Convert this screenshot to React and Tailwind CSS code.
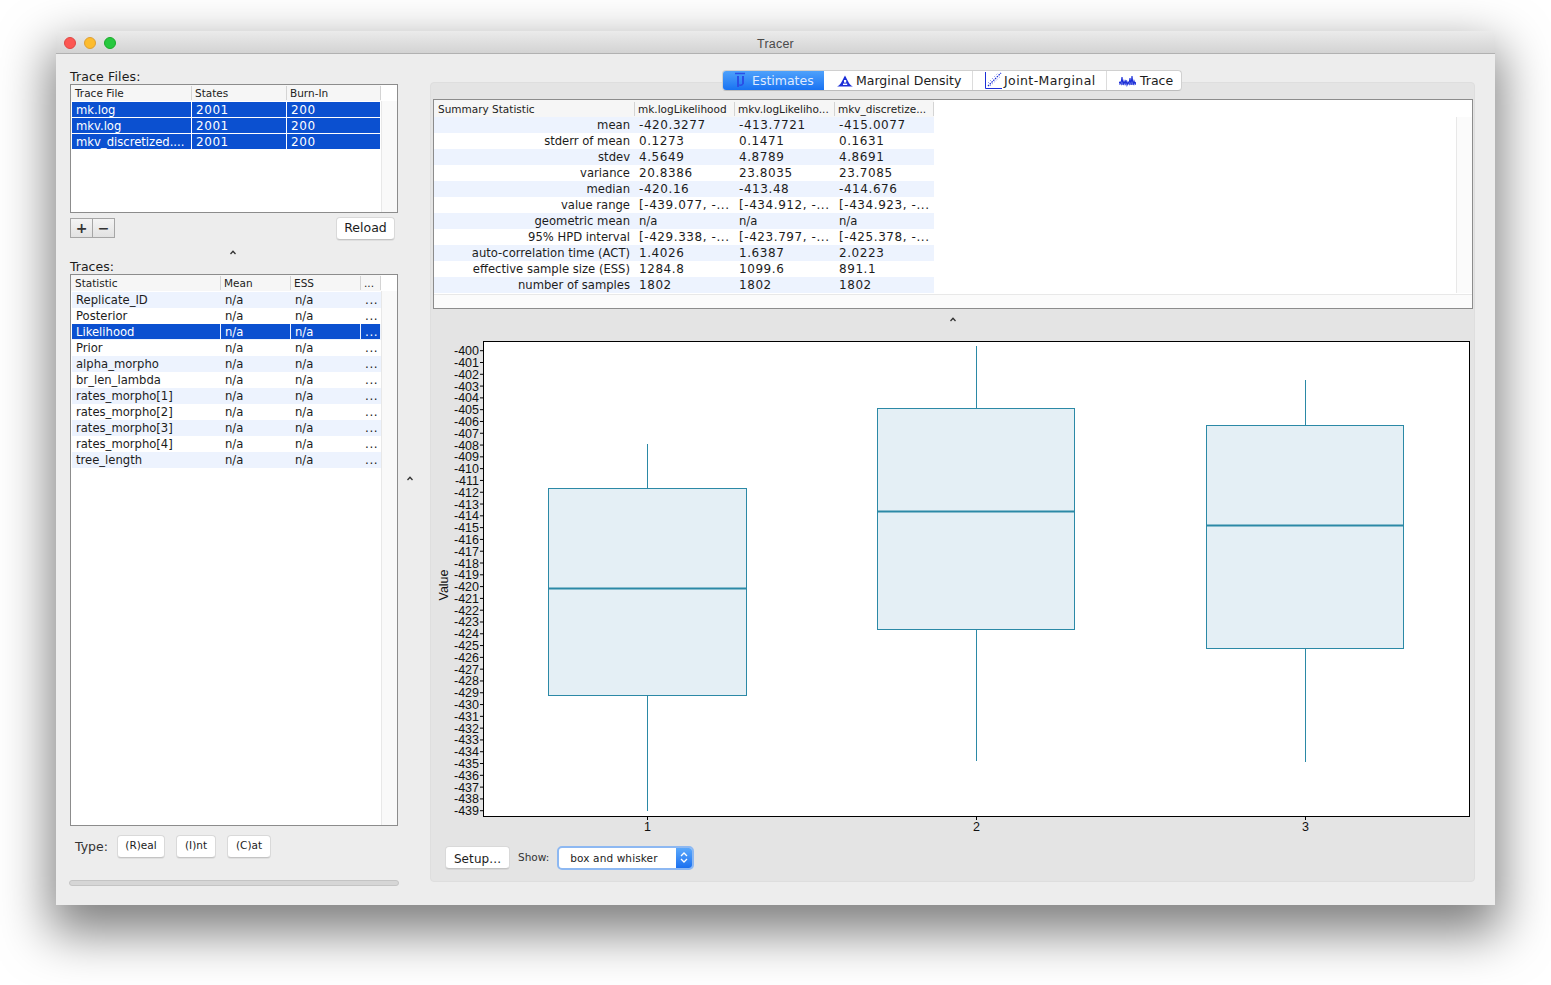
import React from "react";

const FONT = "font-['DejaVu_Sans','Noto_Sans',sans-serif]";

const fileRows = [
  ["mk.log", "2001", "200"],
  ["mkv.log", "2001", "200"],
  ["mkv_discretized....", "2001", "200"],
];

const traceRows = [
  "Replicate_ID",
  "Posterior",
  "Likelihood",
  "Prior",
  "alpha_morpho",
  "br_len_lambda",
  "rates_morpho[1]",
  "rates_morpho[2]",
  "rates_morpho[3]",
  "rates_morpho[4]",
  "tree_length",
];

const summaryRows = [
  ["mean", "-420.3277", "-413.7721", "-415.0077"],
  ["stderr of mean", "0.1273", "0.1471", "0.1631"],
  ["stdev", "4.5649", "4.8789", "4.8691"],
  ["variance", "20.8386", "23.8035", "23.7085"],
  ["median", "-420.16", "-413.48", "-414.676"],
  ["value range", "[-439.077, -...", "[-434.912, -...", "[-434.923, -..."],
  ["geometric mean", "n/a", "n/a", "n/a"],
  ["95% HPD interval", "[-429.338, -...", "[-423.797, -...", "[-425.378, -..."],
  ["auto-correlation time (ACT)", "1.4026", "1.6387", "2.0223"],
  ["effective sample size (ESS)", "1284.8", "1099.6", "891.1"],
  ["number of samples", "1802", "1802", "1802"],
];

// header cell with the little separator on its right edge
function HeadCell({ width, children, wide }) {
  return (
    <div
      className={`flex h-[14px] items-center border-r border-[#d4d4d4] pt-[1px] text-[10.5px] leading-[13px] text-[#222] whitespace-nowrap overflow-hidden ${wide ? "pl-[4px]" : "pl-[3px]"}`}
      style={{ width }}
    >
      {children}
    </div>
  );
}

function Cell({ width, children, selected, right }) {
  // numbers are set wider than the labels in the reference
  const numeric = !right && /^[\[\-\d.]/.test(children);
  return (
    <div
      className={`h-[15px] mr-px flex items-center pt-[1px] whitespace-nowrap overflow-hidden leading-[14px] ${numeric ? "text-[12px] tracking-[0.57px]" : "text-[11.6px]"} ${right ? "justify-end pr-[4px]" : "pl-[4px]"} ${selected ? "bg-[#0b50d0] text-white" : "text-[#1c1c1c]"}`}
      style={{ width: width - 1 }}
    >
      {children}
    </div>
  );
}

function ListTable({ heightClass, head, widths, children }) {
  return (
    <div className={`relative ${heightClass} border border-[#8c8c8c] bg-white`}>
      <div className="flex h-[16px] items-center pl-px bg-[#f6f6f6] w-[310px]">
        {head.map((h, i) => (
          <HeadCell key={h} width={widths[i]}>
            {h}
          </HeadCell>
        ))}
      </div>
      <div className="pt-px pl-px">{children}</div>
      <div className="absolute right-0 top-[16px] bottom-0 w-[16px] bg-[#f9f9f9] border-l border-[#e8e8e8]" />
    </div>
  );
}

function Splitter() {
  return (
    <svg width="6" height="5" viewBox="0 0 6 5" fill="none" className="block">
      <path d="M0.5 4 L3 1.2 L5.5 4" stroke="#333" strokeWidth="1.3" />
    </svg>
  );
}

function MacButton({ className, children }) {
  return (
    <button className={`flex items-center justify-center rounded-[4px] bg-white border border-[#d9d9d9] border-b-[#c4c4c4] shadow-[0_1px_0_rgba(0,0,0,0.06)] text-[#1c1c1c] ${className}`}>
      {children}
    </button>
  );
}

function MuIcon() {
  return (
    <svg width="14" height="17" viewBox="0 0 14 17" fill="none" stroke="#2a4fe6">
      <path d="M2 1.5h10" strokeWidth="1.5" />
      <path d="M5 4v11M10 4v8" strokeWidth="2" />
      <path d="M5 12.5c1.5 1 4 1 5 -0.5" strokeWidth="1.4" />
    </svg>
  );
}

function DensityIcon() {
  return (
    <svg width="16" height="12" viewBox="0 0 16 12">
      <path d="M0 11.5 C3 11 5 6 8 0.5 C11 6 13 11 16 11.5 Z" fill="#1c2fd8" />
      <rect x="7" y="5" width="2.2" height="2.6" fill="#fff" />
      <rect x="6" y="8.6" width="4.2" height="1.4" fill="#fff" />
    </svg>
  );
}

function JointIcon() {
  return (
    <svg width="17" height="17" viewBox="0 0 17 17" fill="none">
      <path d="M0.5 0v16.5H17" stroke="#1c2fd8" />
      <path d="M3 14 L16 1" stroke="#1c2fd8" strokeDasharray="1.5 1" strokeWidth="1.3" />
      <path d="M5 14 L16 4M3 11 L13 1" stroke="#6f7ee8" strokeDasharray="1 2" />
    </svg>
  );
}

function TraceIcon() {
  return (
    <svg width="17" height="12" viewBox="0 0 17 12" fill="none" stroke="#1c2fd8" strokeWidth="1.1">
      <path d="M0 8 L1 7 L2 9 L3 2 L4 10 L5 6 L6 9 L7 5 L8 10 L9 7 L10 9 L11 3 L12 10 L13 1 L14 10 L15 6 L16 9 L17 7" />
      <path d="M0 9h17" strokeDasharray="1 1" />
    </svg>
  );
}

function Tabs() {
  const tab = "flex items-center h-full border-r border-[#dcdcdc] text-[12.5px] text-[#1c1c1c]";
  return (
    <div className="relative z-10 ml-[292px] flex h-[21px] w-[460px] rounded-[4px] bg-white border border-[#d0d0d0] border-b-[#bdbdbd] overflow-hidden">
      <div className="flex h-full w-[101px] items-center gap-[5px] pl-[10px] bg-gradient-to-b from-[#4ea1fb] to-[#1872f2] text-[#dfeaff] text-[12.5px]">
        <MuIcon />
        <span className="pt-[1px]">Estimates</span>
      </div>
      <div className={`${tab} w-[149px] pl-[13px] gap-[3px]`}>
        <DensityIcon />
        <span className="pt-[1px]">Marginal Density</span>
      </div>
      <div className={`${tab} w-[134px] pl-[12px] gap-[2px]`}>
        <JointIcon />
        <span className="pt-[1px] tracking-[0.4px]">Joint-Marginal</span>
      </div>
      <div className="flex h-full flex-1 items-center pl-[12px] gap-[4px] text-[12.5px] text-[#1c1c1c]">
        <TraceIcon />
        <span className="pt-[1px]">Trace</span>
      </div>
    </div>
  );
}

function SummaryTable() {
  const widths = [201, 100, 100, 99];
  return (
    <div className="relative h-[210px] w-[1040px] border border-[#8c8c8c] bg-white">
      <div className="flex h-[17px] w-[500px] items-center bg-[#f6f6f6]">
        {["Summary Statistic", "mk.logLikelihood", "mkv.logLikeliho...", "mkv_discretize..."].map((h, i) => (
          <HeadCell key={h} width={widths[i]} wide={i === 0}>
            {h}
          </HeadCell>
        ))}
      </div>
      <div className="w-[500px]">
        {summaryRows.map((row, r) => (
          <div key={row[0]} className={`flex h-[16px] ${r % 2 === 0 ? "bg-[#edf3fe]" : "bg-white"}`}>
            {row.map((c, i) => (
              <Cell key={i} width={widths[i]} right={i === 0}>
                {c}
              </Cell>
            ))}
          </div>
        ))}
      </div>
      <div className="absolute right-0 top-[17px] h-[176px] w-[16px] border-l border-[#e8e8e8] bg-[#fbfbfb]" />
      <div className="absolute left-0 right-0 bottom-0 h-[14px] border-t border-[#e8e8e8] bg-[#fbfbfb]" />
    </div>
  );
}

function Chart() {
  const ticks = [];
  for (let i = 0; i < 40; i++) ticks.push(i);
  const stroke = "#2b89a6";
  const boxes = [
    { label: "1", x: 548.5, w: 198, top: 488.5, bottom: 695.5, med: 588.5, cx: 647.5, hi: 444, lo: 811 },
    { label: "2", x: 877.5, w: 197, top: 408.5, bottom: 629.5, med: 511.5, cx: 976.5, hi: 346, lo: 761 },
    { label: "3", x: 1206.5, w: 197, top: 425.5, bottom: 648.5, med: 525.5, cx: 1305.5, hi: 380, lo: 762 },
  ];
  return (
    <svg width="1040" height="500" viewBox="433 335 1040 500" className="block">
      <rect x="483.5" y="341.5" width="986" height="475" fill="#fff" stroke="#000" />
      {ticks.map((i) => {
        const y = 350.7 + i * 11.795;
        return (
          <g key={i}>
            <line x1="480" x2="483" y1={y} y2={y} stroke="#000" />
            <text x="479" y={y + 4.5} textAnchor="end" fontFamily="'Liberation Sans', sans-serif" fontSize="12.5" fill="#111">
              {-400 - i}
            </text>
          </g>
        );
      })}
      {boxes.map((b) => (
        <g key={b.label}>
          <line x1={b.cx} x2={b.cx} y1={b.hi} y2={b.lo} stroke={stroke} />
          <rect x={b.x} y={b.top} width={b.w} height={b.bottom - b.top} fill="#e4eff5" stroke={stroke} />
          <line x1={b.x} x2={b.x + b.w} y1={b.med} y2={b.med} stroke={stroke} strokeWidth="2" />
          <line x1={b.cx} x2={b.cx} y1="817" y2="820" stroke="#000" />
          <text x={b.cx} y="831" textAnchor="middle" fontFamily="'Liberation Sans', sans-serif" fontSize="12.5" fill="#111">
            {b.label}
          </text>
        </g>
      ))}
      <text transform="translate(448 585) rotate(-90)" textAnchor="middle" fontFamily="'Liberation Sans', sans-serif" fontSize="12.5" fill="#111">
        Value
      </text>
    </svg>
  );
}

export default function App() {
  const fileWidths = [120, 95, 94];
  const traceWidths = [149, 70, 70, 20];

  return (
    <div className={`h-[985px] w-[1551px] overflow-hidden bg-white pl-[56px] pt-[31px] ${FONT}`}>
      <div className="h-[874px] w-[1439px] rounded-t-[5px] bg-[#ededed] shadow-[0_22px_50px_6px_rgba(0,0,0,0.5)]">
        {/* Title bar */}
        <div className="relative flex h-[23px] items-center justify-center rounded-t-[5px] border-b border-[#b1b1b1] bg-gradient-to-b from-[#ebebeb] to-[#d3d3d3]">
          <div className="absolute left-[8px] top-[6px] flex gap-[8px]">
            <span className="h-[12px] w-[12px] rounded-full bg-[#fc5753] border border-[#df4744]" />
            <span className="h-[12px] w-[12px] rounded-full bg-[#fdbc2e] border border-[#de9f34]" />
            <span className="h-[12px] w-[12px] rounded-full bg-[#27c83f] border border-[#1aab29]" />
          </div>
          <span className="pt-[4px] text-[12.5px] tracking-[0.2px] text-[#4a4a4a] font-['Liberation_Sans',sans-serif]">Tracer</span>
        </div>

        <div className="flex">
          {/* Left column */}
          <div className="ml-[14px] w-[328px] pt-[15px]">
            <div className="h-[15px] text-[12.5px] tracking-[0.15px] leading-[15px] text-[#1c1c1c]">Trace Files:</div>
            <ListTable heightClass="h-[129px]" head={["Trace File", "States", "Burn-In"]} widths={fileWidths}>
              {fileRows.map((row) => (
                <div key={row[0]} className="flex h-[16px]">
                  {row.map((c, i) => (
                    <Cell key={i} width={fileWidths[i]} selected>
                      {c}
                    </Cell>
                  ))}
                </div>
              ))}
            </ListTable>

            <div className="mt-[4px] flex h-[23px] items-start justify-between pr-[3px]">
              <div className="mt-[1px] flex h-[20px] w-[45px] border border-[#a6a6a6] bg-gradient-to-b from-[#f4f4f4] to-[#e2e2e2] text-[14px] font-bold leading-[18px] text-[#333]">
                <span className="w-[22px] border-r border-[#a6a6a6] text-center">+</span>
                <span className="flex-1 text-center">−</span>
              </div>
              <MacButton className="h-[23px] w-[59px] text-[12.5px]">Reload</MacButton>
            </div>

            <div className="flex h-[20px] items-center justify-center pt-[4px] pr-[2px]">
              <Splitter />
            </div>

            <div className="h-[14px] text-[12.5px] leading-[14px] text-[#1c1c1c]">Traces:</div>
            <ListTable heightClass="h-[552px]" head={["Statistic", "Mean", "ESS", "..."]} widths={traceWidths}>
              {traceRows.map((name, r) => (
                <div key={name} className={`flex h-[16px] ${r % 2 === 0 ? "bg-[#edf3fe]" : ""} w-[309px]`}>
                  <Cell width={149} selected={name === "Likelihood"}>
                    {name}
                  </Cell>
                  <Cell width={70} selected={name === "Likelihood"}>
                    n/a
                  </Cell>
                  <Cell width={70} selected={name === "Likelihood"}>
                    n/a
                  </Cell>
                  <Cell width={20} selected={name === "Likelihood"}>
                    ...
                  </Cell>
                </div>
              ))}
            </ListTable>

            <div className="mt-[9px] flex h-[23px] items-center pl-[5px] text-[12.5px] text-[#333]">
              <span className="w-[42px] pt-[1px]">Type:</span>
              <MacButton className="h-[23px] w-[48px] pb-[2px] text-[10.5px]">(R)eal</MacButton>
              <MacButton className="ml-[11px] h-[23px] w-[40px] pb-[2px] text-[10.5px]">(I)nt</MacButton>
              <MacButton className="ml-[11px] h-[23px] w-[44px] pb-[2px] text-[10.5px]">(C)at</MacButton>
            </div>

            <div className="-ml-[1px] mt-[22px] h-[6px] w-[330px] rounded-full border border-[#c4c4c4] bg-[#d6d6d6]" />
          </div>

          {/* Splitter */}
          <div className="flex w-[32px] items-start pl-[9px] pt-[422px]">
            <Splitter />
          </div>

          {/* Right column */}
          <div className="w-[1045px] pt-[16px]">
            <Tabs />
            <div className="-mt-[9px] h-[800px] rounded-[4px] border border-[#dedede] bg-[#e4e4e4] pl-[2px] pt-[16px]">
              <SummaryTable />
              <div className="flex h-[26px] w-[1040px] items-center justify-center pb-[6px] pr-[1px]">
                <Splitter />
              </div>
              <Chart />
              <div className="mt-[11px] flex h-[23px] items-center pl-[12px]">
                <MacButton className="h-[23px] w-[65px] pt-[2px] text-[12px] tracking-[0.1px]">Setup...</MacButton>
                <span className="ml-[8px] pt-[1px] text-[10.5px] text-[#333]">Show:</span>
                <div className="ml-[8px] flex h-[24px] w-[137px] overflow-hidden rounded-[5px] border-[2px] border-[#8db8f2] bg-white">
                  <span className="flex-1 pl-[11px] text-[10.5px] tracking-[0.12px] leading-[20px] text-[#222]">box and whisker</span>
                  <span className="flex w-[16px] items-center justify-center bg-gradient-to-b from-[#5aa8fb] to-[#1a70f0]">
                    <svg width="8" height="13" viewBox="0 0 8 13" fill="none" stroke="#fff" strokeWidth="1.3">
                      <path d="M1 5l3-3 3 3M1 8l3 3 3-3" />
                    </svg>
                  </span>
                </div>
              </div>
            </div>
          </div>
        </div>
      </div>
    </div>
  );
}
